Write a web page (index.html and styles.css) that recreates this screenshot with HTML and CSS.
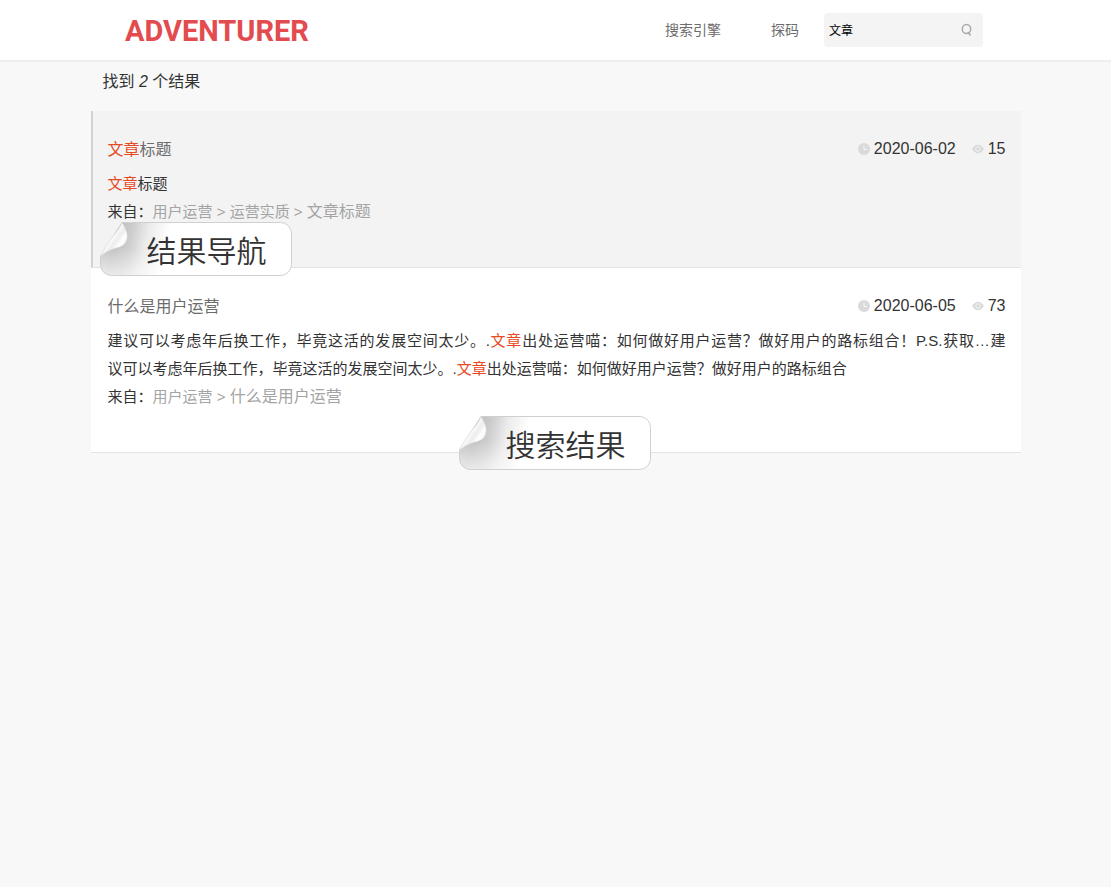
FILE: index.html
```html
<!DOCTYPE html>
<html lang="zh-CN">
<head>
<meta charset="utf-8">
<meta name="viewport" content="width=device-width, initial-scale=1">
<title>ADVENTURER</title>
<link rel="stylesheet" href="styles.css">
</head>
<body>
<svg class="defs" width="0" height="0" aria-hidden="true">
  <defs>
    <linearGradient id="shade" gradientUnits="userSpaceOnUse" x1="14" y1="22" x2="64" y2="34">
      <stop offset="0" stop-color="#bcbcbc"/>
      <stop offset="0.3" stop-color="#cfcfcf"/>
      <stop offset="0.6" stop-color="#ececec"/>
      <stop offset="1" stop-color="#fff"/>
    </linearGradient>
    <linearGradient id="corner" gradientUnits="userSpaceOnUse" x1="18" y1="22" x2="8" y2="54">
      <stop offset="0" stop-color="#fff" stop-opacity="0"/>
      <stop offset="1" stop-color="#fff" stop-opacity="0.7"/>
    </linearGradient>
    <linearGradient id="fold" gradientUnits="userSpaceOnUse" x1="9" y1="14" x2="25" y2="25">
      <stop offset="0" stop-color="#dedede"/>
      <stop offset="0.2" stop-color="#fafafa"/>
      <stop offset="0.45" stop-color="#ededed"/>
      <stop offset="0.7" stop-color="#fff"/>
      <stop offset="1" stop-color="#eee"/>
    </linearGradient>
    <symbol id="paper" viewBox="0 0 192 54">
      <path d="M22 .5H180.500A11 11 0 0 1 191.500 11.500V42.500A11 11 0 0 1 180.500 53.500H11.500A11 11 0 0 1 .5 42.500V34Z" fill="url(#shade)"/>
      <path d="M22 .5H180.500A11 11 0 0 1 191.500 11.500V42.500A11 11 0 0 1 180.500 53.500H11.500A11 11 0 0 1 .5 42.500V34Z" fill="url(#corner)" stroke="#d0d0d0"/>
      <path d="M22 .5C25 5 28 11 27 17C25 25 19 25 13 27C8 29 4 31 .5 34.500C5 25 9 19 14 13C18 8 21 4 22 .5Z" fill="url(#fold)" stroke="#d2d2d2" stroke-width=".5"/>
    </symbol>
    <symbol id="clock" viewBox="0 0 12 12">
      <circle cx="6" cy="6" r="6" fill="#dadada"/>
      <path d="M6 2.500V6.500H9" fill="none" stroke="#f6f6f6"/>
    </symbol>
    <symbol id="eye" viewBox="0 0 12 12">
      <path d="M0 6Q6-2.500 12 6Q6 14.500 0 6Z" fill="#d8dada"/>
      <circle cx="6" cy="6" r="2.300" fill="#d8dada" stroke="#f4f4f4"/>
    </symbol>
  </defs>
</svg>
<header class="header">
  <div class="header-inner">
    <a class="logo" href="#">ADVENTURER</a>
    <nav class="nav">
      <a href="#">搜索引擎</a>
      <a href="#">探码</a>
    </nav>
    <form class="search">
      <input class="search-input" type="text" value="文章" aria-label="搜索">
      <button class="search-button" type="button" aria-label="提交搜索">
        <svg width="12" height="14" viewBox="0 0 12 14" aria-hidden="true"><ellipse cx="5.500" cy="6" rx="4.200" ry="4.600" fill="none" stroke="#aaa" stroke-width="1.500"/><path d="M7 9L9.500 12.500" stroke="#aaa" stroke-width="1.600"/></svg>
      </button>
    </form>
  </div>
</header>
<main class="main">
  <p class="count">找到 <em>2</em> 个结果</p>
  <article class="result active">
    <div class="result-head">
      <h2 class="title"><a href="#"><mark>文章</mark>标题</a></h2>
      <div class="meta">
        <svg width="12" height="12" aria-hidden="true"><use href="#clock"/></svg><time>2020-06-02</time>
        <svg class="eye" width="12" height="12" aria-hidden="true"><use href="#eye"/></svg><span>15</span>
      </div>
    </div>
    <p class="summary"><mark>文章</mark>标题</p>
    <p class="source">来自：<a href="#">用户运营</a> <i>&gt;</i> <a href="#">运营实质</a> <i>&gt;</i> <a class="current" href="#">文章标题</a></p>
    <div class="tag tag-nav"><svg class="tag-paper" width="192" height="54" aria-hidden="true"><use href="#paper"/></svg><span class="tag-text">结果导航</span></div>
  </article>
  <article class="result">
    <div class="result-head">
      <h2 class="title"><a href="#">什么是用户运营</a></h2>
      <div class="meta">
        <svg width="12" height="12" aria-hidden="true"><use href="#clock"/></svg><time>2020-06-05</time>
        <svg class="eye" width="12" height="12" aria-hidden="true"><use href="#eye"/></svg><span>73</span>
      </div>
    </div>
    <p class="summary"><span class="full-line">建议可以考虑年后换工作，毕竟这活的发展空间太少。.<mark>文章</mark>出处运营喵：如何做好用户运营？做好用户的路标组合！P.S.获取…建</span>议可以考虑年后换工作，毕竟这活的发展空间太少。.<mark>文章</mark>出处运营喵：如何做好用户运营？做好用户的路标组合</p>
    <p class="source">来自：<a href="#">用户运营</a> <i>&gt;</i> <a class="current" href="#">什么是用户运营</a></p>
    <div class="tag tag-list"><svg class="tag-paper" width="192" height="54" aria-hidden="true"><use href="#paper"/></svg><span class="tag-text">搜索结果</span></div>
  </article>
</main>
</body>
</html>
```
FILE: styles.css
```css
* {
  box-sizing: border-box;
}

body {
  margin: 0;
  background: #f8f8f8;
  color: #333;
  font: 15px/28px "Liberation Sans", "Noto Sans CJK SC", sans-serif;
}

a {
  color: inherit;
  text-decoration: none;
}

p,
h2 {
  margin: 0;
}

mark {
  background: none;
  color: #e64a22;
}

.defs {
  position: absolute;
}

.header {
  background: #fff;
  border-bottom: 2px solid #eee;
}

.header-inner {
  display: flex;
  align-items: center;
  max-width: 931px;
  min-height: 60px;
  margin: 0 auto;
  padding: 0 38px 0 35px;
}

.logo {
  padding-top: 1px;
  color: #e34b4f;
  font: bold 29px/40px Roboto, sans-serif;
}

.nav {
  display: flex;
  gap: 50px;
  margin-left: auto;
  margin-right: 25px;
  color: #6c6c6c;
  font-size: 14px;
}

.search {
  display: flex;
  align-items: center;
  width: 159px;
  height: 34px;
  padding: 0 10px 0 5px;
  border-radius: 4px;
  background: #f4f4f4;
}

.search-input {
  flex: 1;
  min-width: 0;
  padding: 2px 0 0;
  border: 0;
  background: none;
  color: #000;
  font: 12px/20px "Liberation Sans", "Noto Sans CJK SC", sans-serif;
}

.search-button {
  display: flex;
  padding: 0;
  border: 0;
  background: none;
}

.main {
  max-width: 930px;
  margin: 0 auto;
  padding: 6px 0 40px;
}

.count {
  margin-bottom: 15px;
  padding-left: 12px;
  font-size: 16px;
}

.result {
  position: relative;
  padding: 25px 15px 41px 17px;
  border-bottom: 1px solid #e4e4e4;
  background: #fff;
}

.result.active {
  padding-left: 15px;
  border-left: 2px solid #d2d2d2;
  background: #f3f3f3;
}

.result-head {
  display: flex;
  justify-content: space-between;
  margin-bottom: 6px;
}

.title {
  color: #6c6c6c;
  font-size: 16px;
  font-weight: normal;
}

.meta {
  display: flex;
  align-items: center;
  gap: 4px;
  height: 26px;
  font-size: 16px;
}

.eye {
  margin-left: 12px;
}

.full-line {
  display: block;
  text-align: justify;
  text-align-last: justify;
}

.source a,
.source i {
  color: #a4a4a4;
  font-style: normal;
}

.source .current {
  font-size: 16px;
}

.tag {
  position: absolute;
  z-index: 1;
  width: 192px;
  height: 54px;
  color: #333;
}

.tag-nav {
  bottom: -9px;
  left: 7px;
}

.tag-list {
  bottom: -18px;
  left: 50%;
  margin-left: -97px;
}

.tag-paper {
  display: block;
}

.tag-text {
  position: absolute;
  top: 0;
  left: 47px;
  font-family: "Noto Sans CJK SC DemiLight", "Noto Sans CJK SC", sans-serif;
  font-size: 30px;
  font-weight: 350;
  line-height: 54px;
  white-space: nowrap;
}
```
